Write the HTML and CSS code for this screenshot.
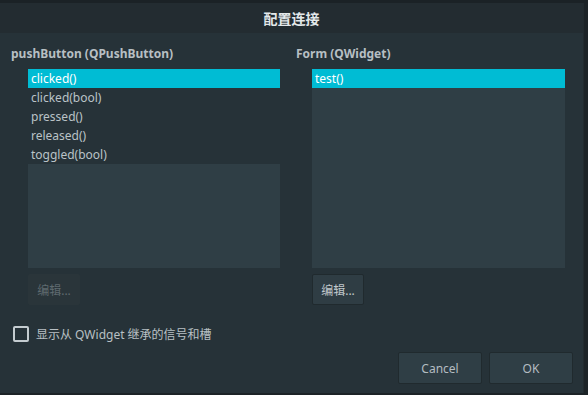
FILE: index.html
```html
<!DOCTYPE html>
<html lang="zh-CN">
<head>
    <meta charset="UTF-8">
    <title>配置连接</title>
    <link rel="stylesheet" href="styles.css">
</head>
<body>
    <div class="top-strip"></div>
    <div class="dialog">
        <div class="title-bar">配置连接</div>

        <div class="content">
            <div class="columns">
                <div class="column">
                    <div class="column-label">pushButton (QPushButton)</div>
                    <div class="list">
                        <div class="list-item selected">clicked()</div>
                        <div class="list-item">clicked(bool)</div>
                        <div class="list-item">pressed()</div>
                        <div class="list-item">released()</div>
                        <div class="list-item">toggled(bool)</div>
                    </div>
                    <button class="btn btn-edit" disabled>编辑...</button>
                </div>
                <div class="column">
                    <div class="column-label">Form (QWidget)</div>
                    <div class="list">
                        <div class="list-item selected">test()</div>
                    </div>
                    <button class="btn btn-edit">编辑...</button>
                </div>
            </div>

            <label class="check-row">
                <span class="checkbox"></span>
                <span class="check-text">显示从 QWidget 继承的信号和槽</span>
            </label>

            <div class="actions">
                <button class="btn btn-action">Cancel</button>
                <button class="btn btn-action">OK</button>
            </div>
        </div>
    </div>
</body>
</html>
```

FILE: styles.css
```css
body {
    margin: 0;
    width: 588px;
    height: 395px;
    background: #1c2327;
    font-family: 'Noto Sans', 'Noto Sans CJK SC', sans-serif;
    font-size: 12px;
    color: #bcc5c9;
    overflow: hidden;
}

.top-strip {
    height: 3px;
    background: #1b2226;
}

.dialog {
    height: 390px;
    margin-right: 4px;
    background: #263238;
    border-right: 1px solid #222b2f;
    display: flex;
    flex-direction: column;
}

.title-bar {
    height: 30px;
    background: #232c31;
    color: #e4e9eb;
    font-size: 14px;
    font-weight: bold;
    display: flex;
    align-items: center;
    justify-content: center;
}

.content {
    flex: 1;
    display: flex;
    flex-direction: column;
    padding: 12px 10px 0 11px;
}

/* Two signal/slot columns */
.columns {
    display: grid;
    grid-template-columns: 269px 269px;
    column-gap: 16px;
}

.column {
    display: flex;
    flex-direction: column;
    align-items: flex-start;
}

.column-label {
    font-weight: bold;
    color: #b7bfc3;
    line-height: 18px;
    margin-bottom: 6px;
}

.list {
    align-self: stretch;
    margin-left: 17px;
    height: 199px;
    background: #2f3e45;
}

.column:last-child .list {
    margin-left: 16px;
}

.list-item {
    height: 19px;
    line-height: 19px;
    padding-left: 3px;
    background: #263238;
    color: #bac3c7;
}

.list-item.selected {
    background: #00bcd4;
    color: #ffffff;
}

.btn {
    font-family: inherit;
    font-size: 12px;
    border-radius: 2px;
    padding: 0;
}

.btn-edit {
    margin-top: 6px;
    margin-left: 17px;
    width: 52px;
    height: 31px;
    background: #2f3d44;
    border: 1px solid #202a2e;
    color: #c0c8cc;
}

.column:last-child .btn-edit {
    margin-left: 16px;
}

.btn-edit:disabled {
    background: #2a353a;
    border-color: #2a353a;
    color: #5f6a6f;
}

/* Inherited signals checkbox */
.check-row {
    display: flex;
    align-items: center;
    gap: 7px;
    margin-top: 20px;
    margin-left: 2px;
    color: #b8c0c4;
}

.checkbox {
    width: 12px;
    height: 12px;
    border: 2px solid #c4ccd0;
    border-radius: 2px;
}

.actions {
    display: flex;
    justify-content: flex-end;
    gap: 7px;
    margin-top: 9px;
}

.btn-action {
    width: 84px;
    height: 32px;
    background: #2f3e45;
    border: 1px solid #202a2e;
    color: #b3bcc1;
}
```
